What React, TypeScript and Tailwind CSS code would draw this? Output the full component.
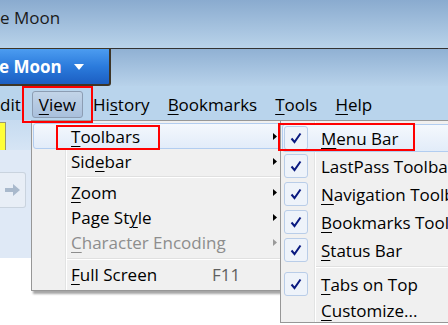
import React from "react";

const U = ({ children }: { children: React.ReactNode }) => (
  <span className="underline decoration-1 underline-offset-[3px]">{children}</span>
);

const Arrow = ({ gray }: { gray?: boolean }) => (
  <svg width="4" height="7" viewBox="0 0 4 7" className="block">
    <path d="M0 0 L4 3.5 L0 7 Z" fill={gray ? "#9a9a9a" : "#000"} />
  </svg>
);

const Check = () => (
  <div className="w-[24px] h-[24px] rounded-[3px] border border-[#b9cde8] bg-[#eef3fa] flex items-center justify-center">
    <svg width="12" height="12" viewBox="0 0 12 12">
      <path d="M1.5 6.5 L4.5 10 L10.5 1.5" fill="none" stroke="#0a1a80" strokeWidth="2" />
    </svg>
  </div>
);

type VItem = { label: React.ReactNode; arrow?: boolean; gray?: boolean; sc?: string; hl?: boolean; h?: string };

const ViewRow = ({ it }: { it: VItem }) => (
  <div
    className={
      "relative flex items-center pl-[37px] pr-[11px] " +
      (it.h ?? "h-[25px] ") +
      (it.hl
        ? " rounded-[3px] border border-[#b2cdf0] bg-gradient-to-b from-[#f4f8fd] to-[#e2ecf9]"
        : " border border-transparent") +
      (it.gray ? " text-[#8d8d8d]" : " text-black")
    }
  >
    <span className="w-[141px] whitespace-nowrap">{it.label}</span>
    <span className="flex-1 text-[#606060]">{it.sc}</span>
    {it.arrow && <Arrow gray={it.gray} />}
  </div>
);

const Sep = ({ h, left }: { h: string; left: string }) => (
  <div className={"flex items-center " + h + " " + left}>
    <div className="flex-1 h-[2px] border-t border-[#e0e0e0] border-b-white border-b" />
  </div>
);

type SItem = { label: React.ReactNode; check?: boolean; hl?: boolean; h?: string };

const SubRow = ({ it }: { it: SItem }) => (
  <div
    className={
      "flex items-center pl-[1px] " +
      (it.h ?? "h-[28px]") +
      (it.hl
        ? " rounded-[3px] border border-[#b2cdf0] bg-gradient-to-b from-[#f4f8fd] to-[#e2ecf9]"
        : " border border-transparent")
    }
  >
    <div className="w-[24px] flex items-center justify-center">{it.check && <Check />}</div>
    <span className="ml-[13px] whitespace-nowrap text-black">{it.label}</span>
  </div>
);

export default function App() {
  return (
    <div className="relative w-[448px] h-[325px] overflow-hidden bg-white font-['Open_Sans',sans-serif] text-[17px] leading-none">
      {/* title bar */}
      <div className="h-[48px] bg-gradient-to-b from-[#8aabcf] to-[#b9d3ea] pt-[9px]">
        <span className="text-[#1a1a1a] text-[17px] leading-[17px] whitespace-nowrap">e Moon</span>
      </div>
      {/* tab strip */}
      <div className="h-[38px] flex bg-gradient-to-b from-[#8fb0d3] to-[#b8d2ea]">
        <div className="w-[111px] h-[38px] rounded-br-[3px] border-r-2 border-b-2 border-t border-[#3e3526] bg-gradient-to-b from-[#4c9cf0] via-[#2b7bdc] to-[#1c5ec2] flex items-center">
          <span className="font-bold text-white text-[17px] whitespace-nowrap -ml-[1px]">e Moon</span>
          <svg width="10" height="6" viewBox="0 0 10 6" className="ml-[12px] mt-[1px]">
            <path d="M0 0 L10 0 L5 6 Z" fill="#fff" />
          </svg>
        </div>
        <div className="flex-1 border-t border-[#333]" />
      </div>
      {/* menu bar */}
      <div className="h-[34px] bg-[#b9d4ec] flex items-start gap-[2px] pt-[5px]">
        <div className="h-[27px] pr-[9px] flex items-center whitespace-nowrap">dit</div>
        <div className="h-[27px] px-[6px] flex items-center rounded-[3px] border border-[#8c9db3] bg-gradient-to-b from-[#c2d4e8] to-[#a9c0dc]">
          <span><U>V</U>iew</span>
        </div>
        <div className="h-[27px] px-[8px] flex items-center whitespace-nowrap">Hi<U>s</U>tory</div>
        <div className="h-[27px] px-[8px] flex items-center whitespace-nowrap"><U>B</U>ookmarks</div>
        <div className="h-[27px] px-[8px] flex items-center whitespace-nowrap"><U>T</U>ools</div>
        <div className="h-[27px] px-[8px] flex items-center whitespace-nowrap"><U>H</U>elp</div>
      </div>
      {/* content area */}
      <div className="flex flex-col">
        <div className="h-[30px] bg-gradient-to-b from-[#c6dbf0] to-[#d6e5f5] pt-[2px]">
          <div className="w-[6px] h-[28px] bg-[#ffff38] border-r border-t border-[#9a9a70]" />
        </div>
        <div className="h-[108px] bg-[#dfe9f6] pt-[22px]">
          <div className="w-[26px] h-[36px] rounded-r-[3px] border border-l-0 border-[#c9d3de] bg-[#e8eef6] flex items-center justify-center">
            <svg width="18" height="14" viewBox="0 0 18 14">
              <path d="M1 5 H9 V1 L16 7 L9 13 V9 H1 Z" fill="#a9b9cc" />
            </svg>
          </div>
        </div>
      </div>

      {/* View menu */}
      <div className="absolute left-[31px] top-[120px] w-[260px] h-[171px] bg-[#f0f0f0] border border-[#979797] shadow-[2px_3px_2px_rgba(0,0,0,0.35)] p-[1px] pt-[2px]">
        <div className="absolute left-[33px] top-0 bottom-0 w-[2px] border-l border-[#e2e3e3] border-r border-r-white" />
        <div className="relative">
          <ViewRow it={{ label: <><U>T</U>oolbars</>, arrow: true, hl: true, h: "h-[26px]" }} />
          <ViewRow it={{ label: <>Sid<U>e</U>bar</>, arrow: true }} />
          <Sep h="h-[6px]" left="pl-[34px]" />
          <ViewRow it={{ label: <><U>Z</U>oom</>, arrow: true }} />
          <ViewRow it={{ label: <>Page St<U>y</U>le</>, arrow: true }} />
          <ViewRow it={{ label: <><U>C</U>haracter Encoding</>, arrow: true, gray: true }} />
          <Sep h="h-[7px]" left="pl-[34px]" />
          <ViewRow it={{ label: <><U>F</U>ull Screen</>, sc: "F11" }} />
        </div>
      </div>

      {/* Toolbars submenu */}
      <div className="absolute left-[280px] top-[120px] w-[190px] h-[203px] bg-[#f0f0f0] border border-[#979797] p-[1px] pt-[3px]">
        <div className="absolute left-[33px] top-0 bottom-0 w-[2px] border-l border-[#e2e3e3] border-r border-r-white" />
        <div className="relative">
          <SubRow it={{ label: <><U>M</U>enu Bar</>, check: true, hl: true }} />
          <SubRow it={{ label: <>LastPass Toolbar</>, check: true }} />
          <SubRow it={{ label: <><U>N</U>avigation Toolbar</>, check: true }} />
          <SubRow it={{ label: <><U>B</U>ookmarks Toolbar</>, check: true }} />
          <SubRow it={{ label: <><U>S</U>tatus Bar</>, check: true }} />
          <Sep h="h-[6px]" left="pl-[34px]" />
          <SubRow it={{ label: <><U>T</U>abs on Top</>, check: true }} />
          <SubRow it={{ label: <><U>C</U>ustomize...</>, h: "h-[24px]" }} />
        </div>
      </div>

      {/* red annotation boxes */}
      <div className="absolute left-[22px] top-[86px] w-[71px] h-[37px] border-2 border-[#ff0000]" />
      <div className="absolute left-[56px] top-[125px] w-[104px] h-[25px] border-2 border-[#ff0000]" />
      <div className="absolute left-[278px] top-[123px] w-[137px] h-[28px] border-2 border-[#ff0000]" />
    </div>
  );
}
